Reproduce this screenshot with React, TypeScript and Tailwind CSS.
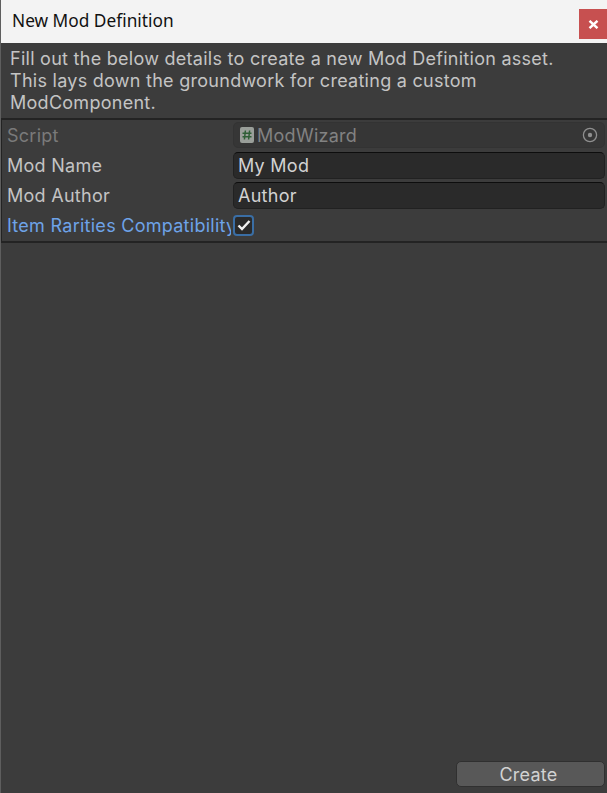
import React from "react";

const inter = "font-['Inter',sans-serif]";

function Row({ label, labelClass, children }: { label: string; labelClass: string; children: React.ReactNode }) {
  return (
    <div className="flex h-[30px] items-center">
      <div className={`mr-[2px] w-[229px] shrink-0 overflow-hidden whitespace-nowrap pl-[5px] text-[18px] tracking-[0.27px] ${labelClass}`}>{label}</div>
      {children}
    </div>
  );
}

function TextField({ value }: { value: string }) {
  return (
    <div className="flex h-[27px] flex-1 items-center rounded-[5px] border border-[#212121] border-t-[#0d0d0d] bg-[#2a2a2a] pl-[4px] text-[18px] tracking-[0.27px] text-[#d2d2d2]">
      {value}
    </div>
  );
}

export default function App() {
  return (
    <div className={`flex h-[793px] w-[607px] flex-col overflow-hidden border-l border-l-[#5e5e5e] bg-[#3c3c3c] ${inter}`}>
      <div className="flex h-[43px] shrink-0 items-start justify-between bg-[#f3f3f3]">
        <div className="pl-[11px] pt-[9px] font-['Noto_Sans',sans-serif] text-[17.3px] leading-[23px] text-[#111111]">New Mod Definition</div>
        <div className="mt-[9px] flex h-[30px] w-[28px] items-center justify-center bg-[#c75050]">
          <svg width="11" height="9" viewBox="0 0 11 9">
            <path d="M1.5 0.8 L9.5 8.2 M9.5 0.8 L1.5 8.2" stroke="#ffffff" strokeWidth="2.4" fill="none" />
          </svg>
        </div>
      </div>
      <div className="h-[75px] shrink-0 pl-[9px] pt-[5px] text-[18px] leading-[22px] tracking-[0.27px] text-[#c4c4c4]">
        <div>Fill out the below details to create a new Mod Definition asset.</div>
        <div>This lays down the groundwork for creating a custom</div>
        <div>ModComponent.</div>
      </div>
      <div className="h-[125px] shrink-0 border-y-2 border-l border-[#232323] pr-[2px]">
        <Row label="Script" labelClass="text-[#7a7a7a]">
          <div className="flex h-[26px] flex-1 items-center rounded-[5px] border border-[#333333] bg-[#363636] pl-[6px] pr-[6px] text-[18px] tracking-[0.27px] text-[#828282]">
            <svg width="14" height="16" viewBox="0 0 14 16" className="mr-[3px] shrink-0">
              <rect x="0" y="0" width="14" height="16" rx="2" fill="#9a9f9a" />
              <path d="M5.4 3.5 L4.4 12.5 M9.6 3.5 L8.6 12.5 M2.5 6.3 H11.5 M2.5 9.7 H11.5" stroke="#2f5f36" strokeWidth="1.5" fill="none" />
            </svg>
            <span className="flex-1">ModWizard</span>
            <svg width="16" height="16" viewBox="0 0 16 16">
              <circle cx="8" cy="8" r="6.6" stroke="#8f8f8f" strokeWidth="1.3" fill="none" />
              <circle cx="8" cy="8" r="2.2" fill="#8f8f8f" />
            </svg>
          </div>
        </Row>
        <Row label="Mod Name" labelClass="text-[#c4c4c4]">
          <TextField value="My Mod" />
        </Row>
        <Row label="Mod Author" labelClass="text-[#c4c4c4]">
          <TextField value="Author" />
        </Row>
        <Row label="Item Rarities Compatibility" labelClass="text-[#6ea3e8]">
          <div className="flex h-[21px] w-[21px] items-center justify-center rounded-[4px] border-2 border-[#3a6ea5] bg-[#2a2a2a]">
            <svg width="14" height="12" viewBox="0 0 14 12">
              <path d="M1.5 6.5 L5 10 L12.5 2" stroke="#f0f0f0" strokeWidth="2.4" fill="none" />
            </svg>
          </div>
        </Row>
      </div>
      <div className="flex flex-1 items-end justify-end pb-[6px] pr-[2px]">
        <div className="flex h-[26px] w-[149px] items-center justify-center rounded-[5px] border border-[#303030] bg-[#585858] pr-[4px] text-[18px] tracking-[0.27px] text-[#d2d2d2]">
          Create
        </div>
      </div>
    </div>
  );
}
